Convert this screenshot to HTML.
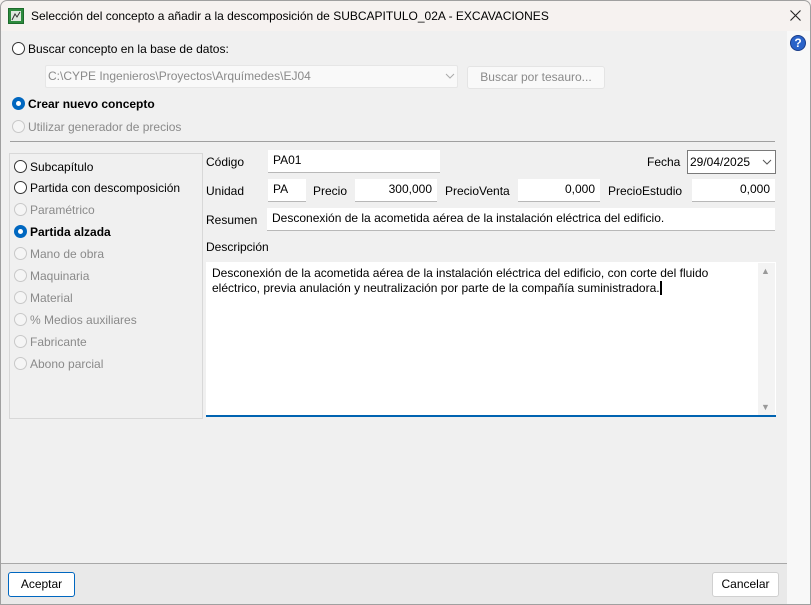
<!DOCTYPE html>
<html><head><meta charset="utf-8"><style>
*{box-sizing:border-box;margin:0;padding:0}
body{width:811px;height:605px;overflow:hidden;background:#f0f0f0;font-family:"Liberation Sans",sans-serif;font-size:12px;color:#000;position:relative}
.a{position:absolute;white-space:nowrap}
.tb{left:0;top:0;width:811px;height:31px;background:#f6f2f0}
.rad{position:absolute;width:13px;height:13px;border:1px solid #333;border-radius:50%;background:#fff}
.rad.d{border-color:#c8c8c8;background:#f5f5f5}
.rad.s{border:none;background:#0067c0}
.rad.s::after{content:"";position:absolute;left:4px;top:4px;width:5px;height:5px;border-radius:50%;background:#fff}
.g{color:#8a8a8a}
.f{position:absolute;background:#fff;border-bottom:1px solid #b8b8b8;padding:3px 5px;height:23px}
.r{text-align:right}
</style></head><body>
<div class="a tb"></div>
<svg class="a" style="left:8px;top:8px" width="16" height="16" viewBox="0 0 16 16"><rect x="0.5" y="0.5" width="15" height="15" fill="#2e8b3e" stroke="#1d6b2b"/><rect x="3" y="3" width="10" height="10" fill="#dfe8df"/><path d="M4 12l3-6 2 3 3-5" stroke="#333" fill="none"/></svg>
<div class="a" style="left:31px;top:9px">Selección del concepto a añadir a la descomposición de SUBCAPITULO_02A - EXCAVACIONES</div>
<svg class="a" style="left:790px;top:10px" width="11" height="11" viewBox="0 0 11 11"><path d="M0.5 0.5L10.5 10.5M10.5 0.5L0.5 10.5" stroke="#222" stroke-width="1.1"/></svg>
<div class="a" style="left:787px;top:31px;width:24px;height:574px;background:#f8f8f8"></div>
<div class="a" style="left:790px;top:35px;width:16px;height:16px;border-radius:50%;background:#2a63c9;color:#fff;font-weight:bold;text-align:center;font-size:12px;line-height:14px;border:1px solid #1a3d8a">?</div>

<div class="rad" style="left:12px;top:42px"></div>
<div class="a" style="left:28px;top:42px">Buscar concepto en la base de datos:</div>
<div class="a" style="left:45px;top:65px;width:413px;height:23px;background:#f9f9f9;border:1px solid #e6e6e6;border-radius:2px"></div>
<div class="a g" style="left:48px;top:69px">C:\CYPE Ingenieros\Proyectos\Arquímedes\EJ04</div>
<svg class="a" style="left:445px;top:73px" width="10" height="6" viewBox="0 0 10 6"><path d="M1 1l4 4 4-4" stroke="#aaa" fill="none"/></svg>
<div class="a" style="left:467px;top:66px;width:138px;height:23px;background:#f9f9f9;border:1px solid #e4e4e4;border-radius:3px;color:#8a8a8a;text-align:center;line-height:21px">Buscar por tesauro...</div>

<div class="rad s" style="left:12px;top:97px"></div>
<div class="a" style="left:28px;top:97px;font-weight:bold">Crear nuevo concepto</div>
<div class="rad d" style="left:12px;top:120px"></div>
<div class="a g" style="left:28px;top:120px">Utilizar generador de precios</div>
<div class="a" style="left:10px;top:141px;width:765px;height:1px;background:#a0a0a0"></div>

<div class="a" style="left:9px;top:153px;width:194px;height:266px;border:1px solid #d8d8d8"></div>
<div class="rad" style="left:14px;top:160px"></div><div class="a" style="left:30px;top:160px">Subcapítulo</div>
<div class="rad" style="left:14px;top:181px"></div><div class="a" style="left:30px;top:181px">Partida con descomposición</div>
<div class="rad d" style="left:14px;top:203px"></div><div class="a g" style="left:30px;top:203px">Paramétrico</div>
<div class="rad s" style="left:14px;top:225px"></div><div class="a" style="left:30px;top:225px;font-weight:bold">Partida alzada</div>
<div class="rad d" style="left:14px;top:247px"></div><div class="a g" style="left:30px;top:247px">Mano de obra</div>
<div class="rad d" style="left:14px;top:269px"></div><div class="a g" style="left:30px;top:269px">Maquinaria</div>
<div class="rad d" style="left:14px;top:291px"></div><div class="a g" style="left:30px;top:291px">Material</div>
<div class="rad d" style="left:14px;top:313px"></div><div class="a g" style="left:30px;top:313px">% Medios auxiliares</div>
<div class="rad d" style="left:14px;top:335px"></div><div class="a g" style="left:30px;top:335px">Fabricante</div>
<div class="rad d" style="left:14px;top:357px"></div><div class="a g" style="left:30px;top:357px">Abono parcial</div>

<div class="a" style="left:206px;top:155px">Código</div>
<div class="f" style="left:268px;top:150px;width:172px">PA01</div>
<div class="a" style="left:647px;top:155px">Fecha</div>
<div class="a" style="left:687px;top:150px;width:89px;height:24px;background:#fff;border:1px solid #7a7a7a;padding:4px 2px">29/04/2025</div>
<svg class="a" style="left:762px;top:159px" width="10" height="6" viewBox="0 0 10 6"><path d="M1 1l4 4 4-4" stroke="#555" fill="none"/></svg>

<div class="a" style="left:206px;top:184px">Unidad</div>
<div class="f" style="left:268px;top:179px;width:38px">PA</div>
<div class="a" style="left:313px;top:184px">Precio</div>
<div class="f r" style="left:355px;top:179px;width:82px">300,000</div>
<div class="a" style="left:445px;top:184px">PrecioVenta</div>
<div class="f r" style="left:518px;top:179px;width:82px">0,000</div>
<div class="a" style="left:608px;top:184px">PrecioEstudio</div>
<div class="f r" style="left:692px;top:179px;width:83px">0,000</div>

<div class="a" style="left:206px;top:213px">Resumen</div>
<div class="f" style="left:267px;top:208px;width:508px">Desconexión de la acometida aérea de la instalación eléctrica del edificio.</div>
<div class="a" style="left:206px;top:240px">Descripción</div>
<div class="a" style="left:206px;top:262px;width:570px;height:155px;background:#fff;border-bottom:2px solid #0063b1"></div>
<div class="a" style="left:212px;top:266px;line-height:15px">Desconexión de la acometida aérea de la instalación eléctrica del edificio, con corte del fluido<br>eléctrico, previa anulación y neutralización por parte de la compañía suministradora.<span style="display:inline-block;width:2px;height:14px;background:#000;vertical-align:-3px"></span></div>
<div class="a" style="left:758px;top:263px;width:17px;height:152px;background:#f3f3f3"></div>
<div class="a" style="left:761px;top:266px;color:#999;font-size:9px">▲</div>
<div class="a" style="left:761px;top:402px;color:#999;font-size:9px">▼</div>

<div class="a" style="left:0;top:563px;width:787px;height:42px;background:#e9e9e9;border-top:1px solid #a8a8a8"></div>
<div class="a" style="left:8px;top:572px;width:67px;height:25px;background:#fff;border:1px solid #0067c0;border-radius:3px;text-align:center;line-height:23px">Aceptar</div>
<div class="a" style="left:712px;top:572px;width:67px;height:25px;background:#fff;border:1px solid #d0d0d0;border-radius:3px;text-align:center;line-height:23px">Cancelar</div>
<div class="a" style="left:0;top:0;width:811px;height:605px;border:1px solid #a0a0a0;border-radius:7px 7px 0 0"></div>
</body></html>
